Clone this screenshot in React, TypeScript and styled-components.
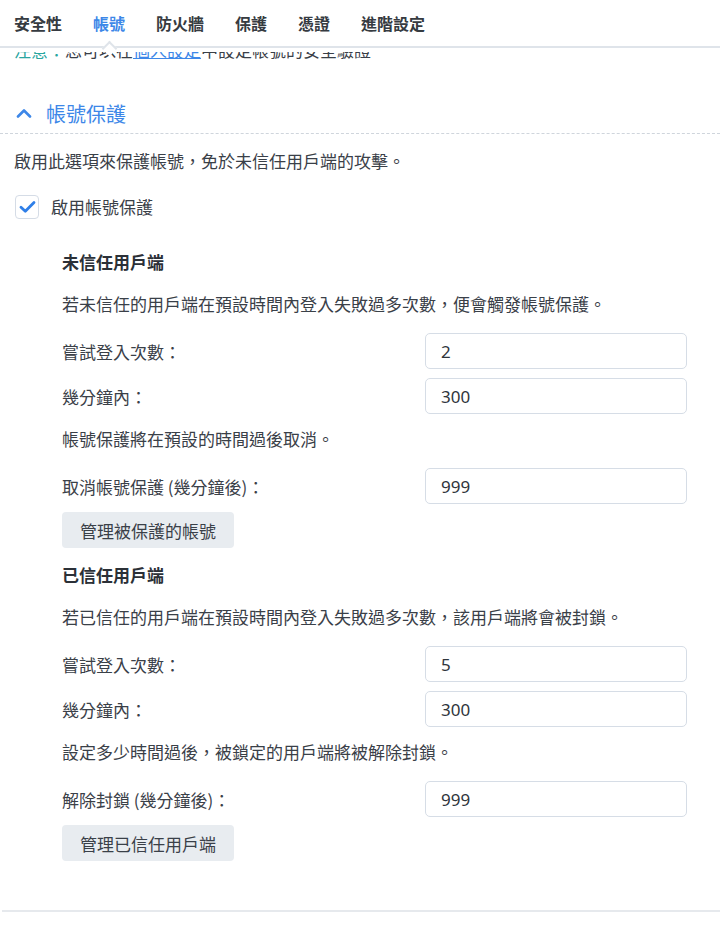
import styled, { createGlobalStyle } from 'styled-components';

const GlobalStyle = createGlobalStyle`
  html, body {
    margin: 0;
    padding: 0;
    background: #fff;
  }
  body {
    font-family: 'Noto Sans CJK TC', 'Noto Sans', sans-serif;
    color: #3a4048;
  }
`;

const Page = styled.div`
  width: 720px;
  height: 932px;
  overflow: hidden;
  background: #fff;
  font-family: 'Noto Sans CJK TC', 'Noto Sans', sans-serif;
`;

const TabBar = styled.nav`
  position: relative;
  z-index: 2;
  height: 46px;
  display: flex;
  align-items: center;
  padding-left: 14px;
  gap: 31px;
  background: #fff;
  border-bottom: 2px solid #dfe4ea;
  box-shadow: 0 4px 0 #fff;
`;

const Tab = styled.div<{ $active?: boolean }>`
  position: relative;
  height: 100%;
  display: flex;
  align-items: center;
  font-size: 16px;
  font-weight: 700;
  color: ${({ $active }) => ($active ? '#3d87e8' : '#363b41')};
  padding-bottom: 1px;

  &::after {
    content: '';
    display: ${({ $active }) => ($active ? 'block' : 'none')};
    position: absolute;
    left: 50%;
    bottom: -7px;
    width: 9px;
    height: 9px;
    margin-left: -5px;
    background: #fff;
    border-top: 2px solid #dfe4ea;
    border-left: 2px solid #dfe4ea;
    transform: rotate(45deg);
  }
`;

const Content = styled.div`
  position: relative;
  z-index: 1;
  margin-top: -10px;
`;

const Note = styled.p`
  margin: 0;
  padding-left: 14px;
  font-size: 17px;
  line-height: 24px;
  color: #3a4048;
`;

const NoteLabel = styled.span`
  color: #2aa6a0;
`;

const NoteLink = styled.a`
  color: #3d87e8;
  text-decoration: underline;
`;

const SectionHeader = styled.div`
  margin-top: 31px;
  height: 40px;
  display: flex;
  align-items: center;
  gap: 14px;
  padding-left: 16px;
  border-bottom: 1px dashed #cfd5dc;
  color: #3d87e8;
  font-size: 20px;
`;

const SectionBody = styled.div`
  padding: 15px 14px 0;
`;

const Text = styled.p<{ $gap?: number }>`
  margin: ${({ $gap }) => $gap ?? 0}px 0 0;
  font-size: 17px;
  line-height: 24px;
  color: #3a4048;
`;

const CheckRow = styled.label`
  margin-top: 21px;
  display: flex;
  align-items: center;
  gap: 12px;
  font-size: 17px;
  color: #3a4048;
  padding-left: 1px;
`;

const CheckBox = styled.span`
  width: 22px;
  height: 22px;
  border: 1px solid #d5dce6;
  border-radius: 4px;
  display: flex;
  align-items: center;
  justify-content: center;
  background: #fff;
`;

const Group = styled.div`
  padding-left: 62px;
  padding-right: 33px;
  display: flex;
  flex-direction: column;
`;

const GroupTitle = styled.h3<{ $gap: number }>`
  margin: ${({ $gap }) => $gap}px 0 0;
  font-size: 17px;
  line-height: 24px;
  font-weight: 700;
  color: #2b3037;
`;

const Row = styled.div<{ $gap: number }>`
  margin-top: ${({ $gap }) => $gap}px;
  display: grid;
  grid-template-columns: 1fr 262px;
  align-items: center;
`;

const Label = styled.span`
  font-size: 17px;
  color: #3a4048;
`;

const Field = styled.div`
  height: 34px;
  border: 1px solid #d6dde6;
  border-radius: 5px;
  padding-left: 15px;
  display: flex;
  align-items: center;
  font-family: 'Noto Sans', sans-serif;
  font-size: 17px;
  color: #2f353c;
  background: #fff;
`;

const Button = styled.button`
  margin-top: 8px;
  align-self: flex-start;
  height: 36px;
  padding: 0 18px;
  border: none;
  border-radius: 4px;
  background: #e8ecf0;
  font-family: inherit;
  font-size: 17px;
  color: #3a4048;
`;

const Divider = styled.div`
  margin: 49px 0 0 2px;
  height: 2px;
  background: #e6e9ed;
`;

type FieldRow = { label: string; value: string };

type GroupProps = {
  title: string;
  titleGap: number;
  intro: string;
  rows: FieldRow[];
  note: string;
  afterRow: FieldRow;
  button: string;
};

function ClientGroup({ title, titleGap, intro, rows, note, afterRow, button }: GroupProps) {
  return (
    <>
      <GroupTitle $gap={titleGap}>{title}</GroupTitle>
      <Text $gap={18}>{intro}</Text>
      {rows.map((r, i) => (
        <Row key={r.label} $gap={i === 0 ? 17 : 9}>
          <Label>{r.label}</Label>
          <Field>{r.value}</Field>
        </Row>
      ))}
      <Text $gap={13}>{note}</Text>
      <Row $gap={17}>
        <Label>{afterRow.label}</Label>
        <Field>{afterRow.value}</Field>
      </Row>
      <Button>{button}</Button>
    </>
  );
}

const tabs = ['安全性', '帳號', '防火牆', '保護', '憑證', '進階設定'];

export default function App() {
  return (
    <Page lang="zh-Hant-TW">
      <GlobalStyle />
      <TabBar>
        {tabs.map((t) => (
          <Tab key={t} $active={t === '帳號'}>
            {t}
          </Tab>
        ))}
      </TabBar>
      <Content>
        <Note>
          <NoteLabel>注意：</NoteLabel>您可以在<NoteLink>個人設定</NoteLink>中設定帳號的安全驗證
        </Note>
        <SectionHeader>
          <svg width="16" height="10" viewBox="0 0 16 10" fill="none">
            <path d="M2 8.5 L8 2.5 L14 8.5" stroke="#3d87e8" strokeWidth="2.6" strokeLinecap="round" strokeLinejoin="round" />
          </svg>
          帳號保護
        </SectionHeader>
        <SectionBody>
          <Text>啟用此選項來保護帳號，免於未信任用戶端的攻擊。</Text>
          <CheckRow>
            <CheckBox>
              <svg width="17" height="14" viewBox="0 0 17 14" fill="none">
                <path d="M2 7.2 L6.3 11.3 L15 2.5" stroke="#2f7fe8" strokeWidth="2.8" strokeLinecap="round" strokeLinejoin="round" />
              </svg>
            </CheckBox>
            啟用帳號保護
          </CheckRow>
        </SectionBody>
        <Group>
          <ClientGroup
            title="未信任用戶端"
            titleGap={31}
            intro="若未信任的用戶端在預設時間內登入失敗過多次數，便會觸發帳號保護。"
            rows={[
              { label: '嘗試登入次數：', value: '2' },
              { label: '幾分鐘內：', value: '300' },
            ]}
            note="帳號保護將在預設的時間過後取消。"
            afterRow={{ label: '取消帳號保護 (幾分鐘後)：', value: '999' }}
            button="管理被保護的帳號"
          />
          <ClientGroup
            title="已信任用戶端"
            titleGap={15}
            intro="若已信任的用戶端在預設時間內登入失敗過多次數，該用戶端將會被封鎖。"
            rows={[
              { label: '嘗試登入次數：', value: '5' },
              { label: '幾分鐘內：', value: '300' },
            ]}
            note="設定多少時間過後，被鎖定的用戶端將被解除封鎖。"
            afterRow={{ label: '解除封鎖 (幾分鐘後)：', value: '999' }}
            button="管理已信任用戶端"
          />
        </Group>
        <Divider />
      </Content>
    </Page>
  );
}
